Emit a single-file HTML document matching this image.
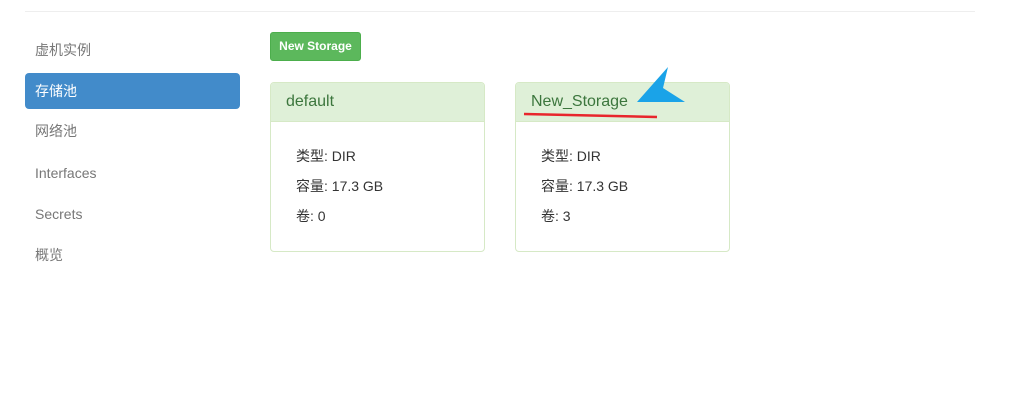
<!DOCTYPE html>
<html><head><style>
body{margin:0;width:1023px;height:420px;background:#fff;font-family:"Liberation Sans","Noto Sans CJK SC",sans-serif;font-size:14px;color:#333;position:relative;overflow:hidden}
.top{position:absolute;left:25px;top:11px;width:950px;border-top:1px solid #eee}
.nav{position:absolute;left:25px;width:215px;height:36px;line-height:36px;padding-left:10px;box-sizing:border-box;color:#777;border-radius:4px}
.nav.act{background:#428bca;color:#fff}
.btn{position:absolute;left:270px;top:32px;width:91px;height:29px;background:#5cb85c;border:1px solid #4cae4c;box-sizing:border-box;border-radius:3px;color:#fff;font-size:12px;font-weight:bold;line-height:27px;text-align:center}
.card{position:absolute;top:82px;width:215px;height:170px;border:1px solid #d6e9c6;box-sizing:border-box;border-radius:4px;overflow:hidden}
.hd{height:38px;background:#dff0d8;border-bottom:1px solid #d6e9c6;color:#3c763d;font-size:16px;line-height:38px;padding-left:15px}
.bd{padding:19px 0 0 25px}
.bd div{height:30px;line-height:30px}
</style></head><body>
<div class="top"></div>
<div class="nav" style="top:32px">虚机实例</div>
<div class="nav act" style="top:73px">存储池</div>
<div class="nav" style="top:113px">网络池</div>
<div class="nav" style="top:155px">Interfaces</div>
<div class="nav" style="top:196px">Secrets</div>
<div class="nav" style="top:237px">概览</div>
<div class="btn">New Storage</div>
<div class="card" style="left:270px"><div class="hd">default</div><div class="bd"><div>类型: DIR</div><div>容量: 17.3 GB</div><div>卷: 0</div></div></div>
<div class="card" style="left:515px"><div class="hd">New_Storage</div><div class="bd"><div>类型: DIR</div><div>容量: 17.3 GB</div><div>卷: 3</div></div></div>
<svg style="position:absolute;left:0;top:0" width="1023" height="420">
<path d="M524 114 L657 117" stroke="#e8262c" stroke-width="2.5" fill="none"/>
<path d="M637 102 L668 67 L663 88 L685 102 Z" fill="#1aa3e8"/>
</svg>
</body></html>
